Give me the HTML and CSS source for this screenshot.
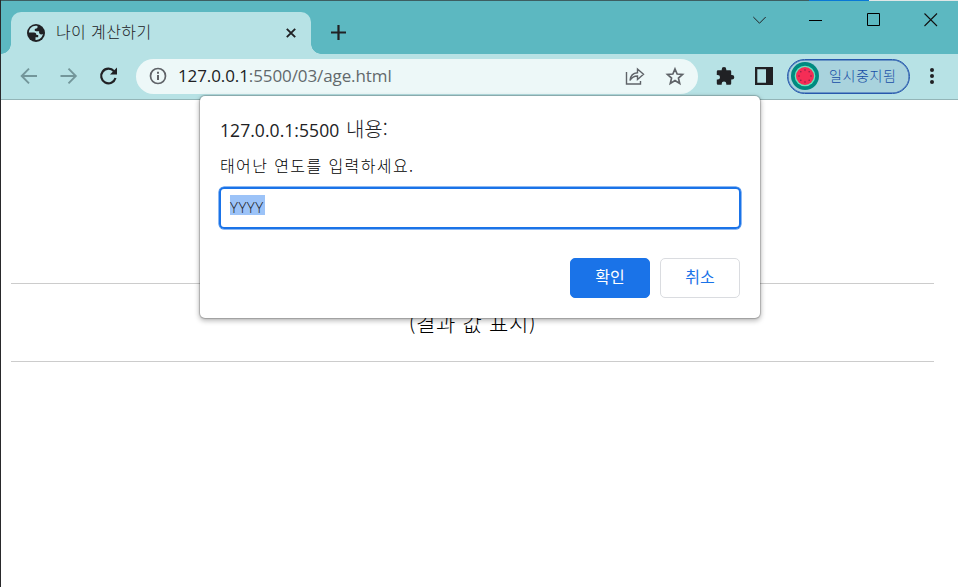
FILE: index.html
```html
<!DOCTYPE html>
<html lang="ko">
<head>
<meta charset="utf-8">
<title>나이 계산하기</title>
<link rel="stylesheet" href="styles.css">
</head>
<body>
<div class="window">
  <div class="topline"></div>
  <header class="tabstrip">
    <div class="tab">
      <svg class="globe" width="20" height="20" viewBox="0 0 20 20"><circle cx="10" cy="10" r="9" fill="#202124"/><path d="M11.500 3C7 2 3.200 5 2.900 9.500H8c1.800 0 2.400 1 2.400 2.500h1.800v2.300H9.500v2.600c3.500.3 6.700-2 7.400-5.800-1.300.6-2.700.5-3.500-.6-.5-.8-.4-1.700-.2-2.200H10.300c-1.300 0-1.900-1-1.500-2 .5-1 2.400-.5 2.700-1.800z" fill="#b7e2e5"/></svg>
      <span class="tab-title">나이 계산하기</span>
      <svg class="tab-close" width="10" height="10" viewBox="0 0 10 10"><path d="M.8.800 9.200 9.200M9.200.800.800 9.200" stroke="#202124" stroke-width="1.900"/></svg>
    </div>
    <svg class="plus" width="15" height="15" viewBox="0 0 15 15"><path d="M7.500 0v15M0 7.500h15" stroke="#202124" stroke-width="2.200"/></svg>
    <div class="controls">
      <svg width="14" height="14" viewBox="0 0 14 14"><path d="M.3 5 6.500 11.200 12.700 5" fill="none" stroke="#202124"/></svg>
      <svg width="14" height="14" viewBox="0 0 14 14"><path d="M-1 8.500h13" stroke="#000"/></svg>
      <svg width="14" height="14" viewBox="0 0 14 14"><path d="M.5 1.500h12v12H.500z" fill="none" stroke="#000"/></svg>
      <svg width="14" height="14" viewBox="0 0 14 14"><path d="m.5 1.500 12.500 12.500M13 1.500 .5 14" stroke="#111" stroke-width="1.100"/></svg>
    </div>
  </header>
  <nav class="toolbar">
    <svg class="nav" width="18" height="18" viewBox="0 0 18 18"><path d="M18 9H3M10 1.700 2.700 9 10 16.300" fill="none" stroke="#73969a" stroke-width="1.900"/></svg>
    <svg class="nav" width="18" height="18" viewBox="0 0 18 18"><path d="M1.500 9h15M9.500 1.700 16.800 9 9.500 16.300" fill="none" stroke="#73969a" stroke-width="1.900"/></svg>
    <svg class="reload" width="20" height="20" viewBox="0 0 20 20"><path d="M17.500 12A7.300 7.300 0 1 1 16 5.200" fill="none" stroke="#202124" stroke-width="2.200"/><path d="M19 1.500V8.500H12z" fill="#202124"/></svg>
    <div class="omnibox">
      <svg width="18" height="18" viewBox="0 0 18 18"><circle cx="9" cy="9" r="7.500" fill="none" stroke="#5f6368" stroke-width="1.700"/><path d="M9 8v5M9 4.700v2" stroke="#5f6368" stroke-width="2"/></svg>
      <span class="url"><b>127.0.0.1</b>:5500/03/age.html</span>
      <svg class="share" width="20" height="18" viewBox="0 0 20 18"><path d="M1.500 5v12H15.500v-3M5 13.500C5.500 8.500 8 6 12.500 5.800V2L18.500 7.300 12.500 12.500V9C9 9 6.800 10.300 5 13.500z" fill="none" stroke="#5f6368" stroke-width="1.400"/></svg>
      <svg class="star" width="20" height="20" viewBox="0 0 20 20"><path d="m10 3 2.150 5 5.400.5-4.100 3.600 1.250 5.300L10 14.600l-4.700 2.800 1.250-5.300L2.450 8.500l5.400-.5z" fill="none" stroke="#5f6368" stroke-width="1.700"/></svg>
    </div>
    <svg class="puzzle" width="20" height="20" viewBox="0 0 20 20"><path d="M3 4.300h3.700V3.400a2.300 2.300 0 0 1 4.600 0v.9H15q1.200 0 1.200 1.200V9H17a2.300 2.300 0 0 1 0 4.600h-.8v3.900q0 1.200-1.200 1.200h-3.700v-1a2.300 2.300 0 0 0-4.600 0v1H3q-1.200 0-1.200-1.200V13.600h.9a2.300 2.300 0 0 0 0-4.600h-.9V5.500Q1.800 4.300 3 4.300z" fill="#202124"/></svg>
    <svg class="panel" width="18" height="18" viewBox="0 0 18 18"><path d="M0 0h18v18H0zM2.300 2.300v13.400H11V2.300z" fill="#202124" fill-rule="evenodd"/></svg>
    <div class="profile">
      <svg width="28" height="28" viewBox="0 0 28 28"><circle cx="14" cy="14" r="14" fill="#008a80"/><circle cx="14" cy="14" r="10.300" fill="#69e5bd"/><circle cx="14" cy="14" r="9" fill="#f52d56"/><g fill="#86204a"><circle cx="14" cy="8" r=".8"/><circle cx="18.200" cy="9.800" r=".8"/><circle cx="20" cy="14" r=".8"/><circle cx="18.200" cy="18.200" r=".8"/><circle cx="14" cy="20" r=".8"/><circle cx="9.800" cy="18.200" r=".8"/><circle cx="8" cy="14" r=".8"/><circle cx="9.800" cy="9.800" r=".8"/></g></svg>
      <span>일시중지됨</span>
    </div>
    <svg class="more" width="6" height="18" viewBox="0 0 6 18"><circle cx="3" cy="3" r="2" fill="#202124"/><circle cx="3" cy="9" r="2" fill="#202124"/><circle cx="3" cy="15" r="2" fill="#202124"/></svg>
  </nav>
  <main class="page"><div class="result"><span>(결과 값 표시)</span></div></main>
</div>
<section class="dialog">
  <h1>127.0.0.1:5500 <span>내용:</span></h1>
  <p>태어난 연도를 입력하세요.</p>
  <div class="field"><span>YYYY</span></div>
  <div class="actions"><button class="ok">확인</button><button class="cancel">취소</button></div>
</section>
</body>
</html>
```
FILE: styles.css
```css
* { box-sizing: border-box; }
body { margin: 0; background: #fff; color: #202124; font-family: "Open Sans", "Noto Sans CJK KR", sans-serif; overflow: hidden; }
svg { display: block; flex: none; overflow: visible; }
.window { height: 587px; border-left: 1px solid #29292b; display: flex; flex-direction: column; }
.topline { height: 1px; background: linear-gradient(90deg, #3d5e61 808px, #0878d7 808px, #0878d7 868px, #dfe7e7 868px); }
.tabstrip { height: 53px; background: #5cb8c1; display: flex; padding-left: 10px; }
.tab { position: relative; margin-top: 11px; width: 300px; height: 42px; border-radius: 10px 10px 0 0; background: #b7e2e5; display: flex; align-items: center; padding: 0 15px; }
.tab::before, .tab::after { content: ""; position: absolute; bottom: 0; width: 10px; height: 10px; }
.tab::before { left: -10px; background: radial-gradient(circle at 0 0, transparent 9.5px, #b7e2e5 10px); }
.tab::after { right: -10px; background: radial-gradient(circle at 100% 0, transparent 9.5px, #b7e2e5 10px); }
.tab-title { margin-left: 10px; font: 300 16px/22px "Noto Sans CJK KR", sans-serif; letter-spacing: .4px; white-space: nowrap; margin-top: -4px; }
.tab-close { margin-left: auto; }
.plus { margin: 24px 0 0 20px; }
.controls { margin: 11px 20px 0 auto; display: flex; gap: 43px; }
.toolbar { height: 46px; background: #b7e2e5; border-bottom: 1px solid #93b5b7; display: flex; align-items: center; padding: 0 23px 1px 18px; }
.nav { margin-right: 22px; }
.reload { margin-left: -1px; }
.omnibox { margin-left: 18px; width: 562px; height: 35px; flex: none; border-radius: 18px; background: #edf8f8; display: flex; align-items: center; padding: 0 13px 0 13px; }
.url { margin-left: 11px; font-size: 17px; line-height: 24px; letter-spacing: -.1px; color: #62696c; white-space: nowrap; }
.url b { font-weight: 400; color: #202124; }
.share { margin-left: auto; }
.star { margin-left: 20px; }
.puzzle { margin-left: 17px; }
.panel { margin-left: 20px; }
.profile { margin-left: 14px; width: 123px; height: 35px; flex: none; border: 1.5px solid #2859ad; box-shadow: inset 0 0 0 .5px #2859ad; border-radius: 18px; background: #a9d3dd; display: flex; align-items: center; padding-left: 3px; color: #174ea6; font: 300 14px/20px "Noto Sans CJK KR", sans-serif; letter-spacing: .6px; white-space: nowrap; }
.profile span { margin: -2px 0 0 10px; }
.more { margin-left: auto; }
.page { padding: 183px 24px 0 10px; }
.result { height: 79px; border: solid #ccc; border-width: 1px 0; text-align: center; font: 300 21px/76px "Noto Sans CJK KR", sans-serif; letter-spacing: .65px; color: #000; }
.dialog { position: absolute; left: 200px; top: 96px; width: 560px; height: 222px; background: #fff; border-radius: 5px; box-shadow: 0 0 1px 1px #0003, 0 2px 5px 1px #0004; padding: 20px; }
.dialog h1 { margin: -1px 0 0 0; font-weight: 400; font-size: 17.5px; line-height: 28px; height: 28px; letter-spacing: .06px; white-space: nowrap; }
.dialog h1 span { font-family: "Noto Sans CJK KR", sans-serif; font-weight: 300; font-size: 20px; margin-left: 2px; }
.dialog p { margin: 10px 0 12px 0; font: 300 16px/24px "Noto Sans CJK KR", sans-serif; height: 24px; letter-spacing: 1.4px; white-space: nowrap; color: #000; }
.field { margin: -2px -1px 0; height: 42px; border: 2px solid #1a73e8; box-shadow: 0 0 0 .5px #1a73e8; border-radius: 5px; padding: 6px 0 0 9px; }
.field span { display: block; width: 35px; height: 20px; background: #9cc3f8; font: 300 15px/24px "Open Sans", sans-serif; letter-spacing: .5px; }
.actions { display: flex; justify-content: flex-end; gap: 10px; margin-top: 29px; }
button { width: 80px; height: 40px; border-radius: 5px; border: 1px solid #dadce0; padding: 0 0 4px; font: 400 16px/22px "Noto Sans CJK KR", sans-serif; }
.ok { background: #1a73e8; border-color: #1a73e8; color: #fff; }
.cancel { background: #fff; color: #1a73e8; }
```
